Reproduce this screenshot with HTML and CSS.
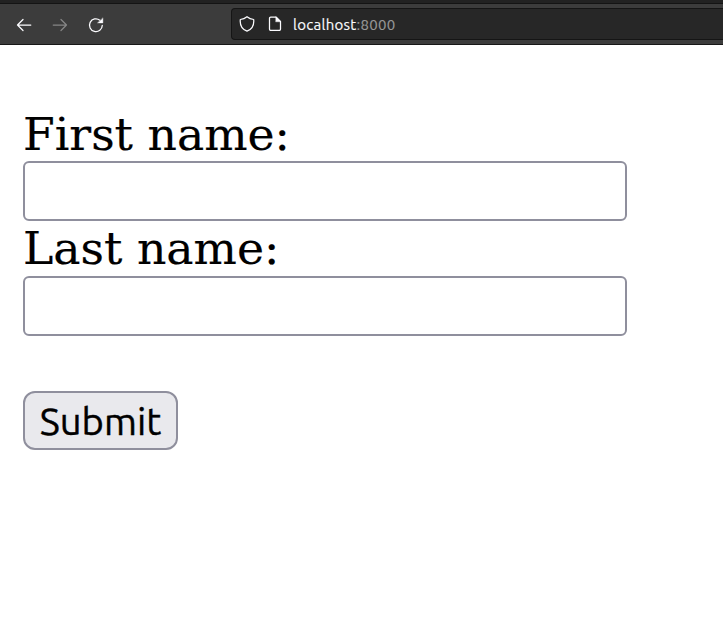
FILE: index.html
```html
<!DOCTYPE html>
<html lang="en">
<head>
<meta charset="utf-8">
<title>localhost:8000</title>
<link rel="stylesheet" href="styles.css">
</head>
<body>
<header class="browser">
  <div class="tabs"></div>
  <div class="toolbar">
    <nav class="nav">
      <svg class="icon" viewBox="0 0 16 16"><path d="M14.8 8H1.5M7 2.5 1.5 8 7 13.5"/></svg>
      <svg class="icon icon-dim" viewBox="0 0 16 16"><path d="M1.2 8h13.3M9 2.5 14.5 8 9 13.5"/></svg>
      <svg class="icon" viewBox="0 0 16 16"><path d="M14.3 8.3A6.4 6.4 0 1 1 11.9 3.2"/><path class="solid" d="M14.9 1.2v4.7H9.8z"/></svg>
    </nav>
    <div class="address">
      <svg class="icon" viewBox="0 0 16 16"><path d="M8 .7 Q10.8 3 14.7 3.5 C15.2 9 12.8 13.4 8 15.1 C3.2 13.4 .8 9 1.3 3.5 Q5.2 3 8 .7Z"/></svg>
      <svg class="icon page" viewBox="0 0 16 16"><path d="M9.3 1.2H3.7a1.2 1.2 0 0 0-1.2 1.2v10.7a1.2 1.2 0 0 0 1.2 1.2h8.6a1.2 1.2 0 0 0 1.2-1.2V5.4z"/><path class="solid" d="M8.9 1 13.8 5.8H8.9z"/></svg>
      <span class="url"><span class="host">localhost</span>:8000</span>
    </div>
  </div>
</header>
<main>
  <form>
    <label for="fname">First name:</label>
    <input class="field" type="text" id="fname">
    <label class="second" for="lname">Last name:</label>
    <input class="field" type="text" id="lname">
    <button class="submit" type="button"><span>Submit</span></button>
  </form>
</main>
</body>
</html>
```
FILE: styles.css
```css
* { box-sizing: border-box; }
html { overflow: hidden; }
body { margin: 0; background: #fff; color: #000; }
.browser { height: 45px; }
.tabs { height: 4px; background: #222; border-bottom: 1px solid #141414; }
.toolbar {
  display: flex;
  height: 41px;
  padding: 4px 0 3px 16px;
  background: #3c3c3c;
  border-bottom: 1px solid #181818;
}
.nav { display: flex; align-items: center; gap: 20px; width: 215px; }
.icon {
  width: 16px;
  height: 16px;
  flex: none;
  fill: none;
  stroke: #fbfbfe;
  stroke-width: 1.25;
  stroke-linecap: round;
  stroke-linejoin: round;
}
.icon-dim { stroke: #858585; }
.icon .solid { fill: #fbfbfe; stroke-width: .4; }
.address {
  flex: 1;
  display: flex;
  align-items: center;
  height: 32px;
  padding-left: 7px;
  background: #272727;
  border: 1px solid #151515;
  border-right: 0;
  border-radius: 4px 0 0 4px;
}
.page { margin-left: 12px; }
.url {
  margin-left: 10px;
  padding-top: 2px;
  font: 15px/20px Ubuntu, "Noto Sans", sans-serif;
  letter-spacing: .28px;
  -webkit-text-stroke: .15px;
  color: #989898;
  white-space: nowrap;
}
.host { color: #fbfbfe; }
form { display: flex; flex-direction: column; align-items: flex-start; padding: 60px 23px 0; }
label { height: 56px; font: 45.7px/60px "DejaVu Serif", serif; -webkit-text-stroke: .2px; }
label.second { line-height: 57px; }
.field {
  width: 604px;
  height: 60px;
  margin: 0 0 -1px;
  border: 2px solid #8f8f9d;
  border-radius: 6px;
  background: #fff;
  outline: none;
}
.submit {
  width: 155px;
  height: 59px;
  margin-top: 56px;
  padding: 0;
  border: 2px solid #8f8f9d;
  border-radius: 12px;
  background: #e9e9ed;
  color: #000;
  font: 38.2px/53px Ubuntu, "Noto Sans", sans-serif;
  -webkit-text-stroke: .4px;
}
```
